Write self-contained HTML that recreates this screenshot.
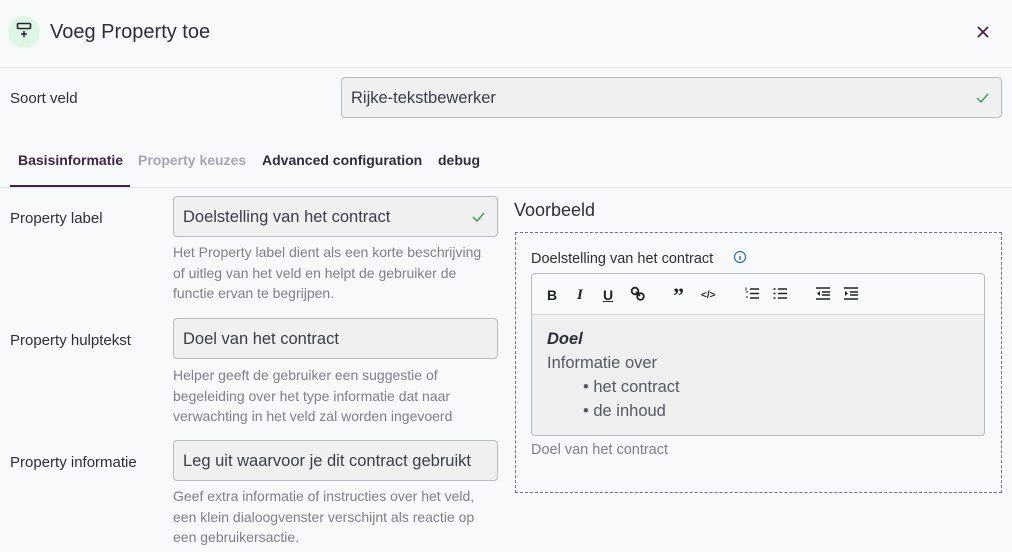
<!DOCTYPE html>
<html><head><meta charset="utf-8"><style>
*{margin:0;padding:0;box-sizing:border-box}
body{width:1012px;height:552px;background:#f8f9fb;font-family:"Liberation Sans",sans-serif;color:#2c2f3a;position:relative;overflow:hidden}
.a{position:absolute;white-space:nowrap}
.inp{position:absolute;background:#f0f0f1;border:1px solid #b9bbc1;border-radius:4px;font-size:16.5px;color:#3a3d47;padding-left:9px;padding-top:1px;display:flex;align-items:center}
.lbl{font-size:15px;color:#2c2f3a}
.help{font-size:14px;color:#7d808a;line-height:20.5px;white-space:normal}
.chk{position:absolute;right:12px;top:50%;margin-top:-6px}
.tb{position:absolute;top:287px;font-size:14px;font-weight:bold;color:#222}
</style></head><body>
<div class="a" style="left:8px;top:16px;width:32px;height:32px;border-radius:50%;background:#dcf7e3"></div>
<svg class="a" style="left:16px;top:22px" width="16" height="16" viewBox="0 0 16 16"><rect x="1.5" y="1.5" width="13" height="5" rx="1" fill="none" stroke="#2a2330" stroke-width="1.6"/><path d="M8 9v6M5 12h6" stroke="#2a2330" stroke-width="1.6"/></svg>
<div class="a" style="left:50px;top:21px;font-size:20px;color:#2c2f3a">Voeg Property toe</div>
<svg class="a" style="left:977px;top:26px" width="12" height="12" viewBox="0 0 12 12"><path d="M1 1L11 11M11 1L1 11" stroke="#3d2645" stroke-width="1.8"/></svg>
<div class="a" style="left:0;top:67px;width:1012px;height:1px;background:#e2e3e7"></div>

<div class="a lbl" style="left:10px;top:90px">Soort veld</div>
<div class="inp" style="left:341px;top:77px;width:661px;height:41px">Rijke-tekstbewerker<svg class="chk" width="13" height="12" viewBox="0 0 13 12"><path d="M1 6l4 4 7-8" stroke="#3c9a4c" stroke-width="1.4" fill="none"/></svg></div>

<div class="a" style="left:18px;top:152px;font-size:14px;color:#3d2645;font-weight:bold">Basisinformatie</div>
<div class="a" style="left:138px;top:152px;font-size:14px;color:#a3a6b0;font-weight:bold">Property keuzes</div>
<div class="a" style="left:262px;top:152px;font-size:14px;color:#2c2f3a;font-weight:bold">Advanced configuration</div>
<div class="a" style="left:438px;top:152px;font-size:14px;color:#2c2f3a;font-weight:bold">debug</div>
<div class="a" style="left:0;top:187px;width:1012px;height:1px;background:#e2e3e7"></div>
<div class="a" style="left:10px;top:185px;width:120px;height:2px;background:#3d2645"></div>

<div class="a lbl" style="left:10px;top:210px">Property label</div>
<div class="inp" style="left:173px;top:196px;width:325px;height:41px">Doelstelling van het contract<svg class="chk" width="13" height="12" viewBox="0 0 13 12"><path d="M1 6l4 4 7-8" stroke="#3c9a4c" stroke-width="1.4" fill="none"/></svg></div>
<div class="a help" style="left:173px;top:242px;width:318px">Het Property label dient als een korte beschrijving of uitleg van het veld en helpt de gebruiker de functie ervan te begrijpen.</div>

<div class="a lbl" style="left:10px;top:332px">Property hulptekst</div>
<div class="inp" style="left:173px;top:318px;width:325px;height:41px">Doel van het contract</div>
<div class="a help" style="left:173px;top:365px;width:318px">Helper geeft de gebruiker een suggestie of begeleiding over het type informatie dat naar verwachting in het veld zal worden ingevoerd</div>

<div class="a lbl" style="left:10px;top:454px">Property informatie</div>
<div class="inp" style="left:173px;top:440px;width:325px;height:41px">Leg uit waarvoor je dit contract gebruikt</div>
<div class="a help" style="left:173px;top:486px;width:318px">Geef extra informatie of instructies over het veld, een klein dialoogvenster verschijnt als reactie op een gebruikersactie.</div>

<div class="a" style="left:514px;top:200px;font-size:18px;color:#2c2f3a">Voorbeeld</div>
<div class="a" style="left:515px;top:232px;width:487px;height:261px;border:1px dashed #6f717a"></div>
<div class="a" style="left:531px;top:251px;font-size:14.5px;color:#2c2f3a">Doelstelling van het contract</div>
<svg class="a" style="left:733px;top:250px" width="14" height="14" viewBox="0 0 14 14"><circle cx="7" cy="7" r="5.5" fill="none" stroke="#2c6fb3" stroke-width="1.2"/><path d="M7 6v4M7 4v.5" stroke="#2c6fb3" stroke-width="1.4"/></svg>
<div class="a" style="left:531px;top:273px;width:454px;height:163px;border:1px solid #b9bbc1;border-radius:4px;background:#efeff0;overflow:hidden">
<div style="height:41px;background:#f8f9fb;border-bottom:1px solid #d6d7db"></div></div>
<div class="tb" style="left:547px">B</div>
<div class="tb" style="left:577px;font-family:'Liberation Serif',serif;font-style:italic;font-size:15px">I</div>
<div class="tb" style="left:603px;text-decoration:underline">U</div>
<svg class="a" style="left:630px;top:286px" width="16" height="16" viewBox="0 0 16 16"><circle cx="5" cy="5" r="3.3" fill="none" stroke="#222" stroke-width="1.8"/><circle cx="10.5" cy="10.5" r="3.3" fill="none" stroke="#222" stroke-width="1.8"/><path d="M6 6l4 4" stroke="#222" stroke-width="1.8"/></svg>
<div class="tb" style="left:673px;font-size:22px;top:285px;font-family:'Liberation Serif',serif;line-height:22px">”</div>
<div class="tb" style="left:701px;font-size:10px;top:290px">&lt;/&gt;</div>
<svg class="a" style="left:745px;top:287px" width="14" height="13" viewBox="0 0 14 13"><path d="M5 2h9M5 6.5h9M5 11h9" stroke="#222" stroke-width="1.5"/><path d="M1 0.5v3M1 5h2M1 10h2" stroke="#222" stroke-width="1"/></svg>
<svg class="a" style="left:773px;top:287px" width="14" height="13" viewBox="0 0 14 13"><path d="M5 2h9M5 6.5h9M5 11h9M0.5 2h2M0.5 6.5h2M0.5 11h2" stroke="#222" stroke-width="1.5"/></svg>
<svg class="a" style="left:816px;top:287px" width="14" height="13" viewBox="0 0 14 13"><path d="M0 1h14M6 5h8M6 8h8M0 12h14" stroke="#222" stroke-width="1.5"/><path d="M4 4L1 6.5 4 9z" fill="#222"/></svg>
<svg class="a" style="left:844px;top:287px" width="14" height="13" viewBox="0 0 14 13"><path d="M0 1h14M6 5h8M6 8h8M0 12h14" stroke="#222" stroke-width="1.5"/><path d="M1 4L4 6.5 1 9z" fill="#222"/></svg>
<div class="a" style="left:547px;top:330px;font-size:16.5px;font-weight:bold;font-style:italic;color:#2c2f3a">Doel</div>
<div class="a" style="left:547px;top:354px;font-size:16.5px;color:#555863">Informatie over</div>
<div class="a" style="left:583px;top:378px;font-size:16.5px;color:#555863">• het contract</div>
<div class="a" style="left:583px;top:402px;font-size:16.5px;color:#555863">• de inhoud</div>
<div class="a" style="left:531px;top:442px;font-size:14.5px;color:#7d808a">Doel van het contract</div>
</body></html>
